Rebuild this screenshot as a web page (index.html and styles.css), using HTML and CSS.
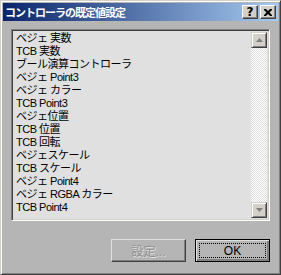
FILE: index.html
```html
<!DOCTYPE html>
<html lang="ja">
<head>
  <meta charset="UTF-8" />
  <title>コントローラの既定値設定</title>
  <link rel="stylesheet" href="styles.css">
</head>
<body>

<div class="window">
  <div class="titlebar">
    <span class="title">コントローラの既定値設定</span>
    <div class="caption-btns">
      <div class="cap-btn">?</div>
      <div class="cap-btn close">
        <svg width="8" height="7" viewBox="0 0 8 7"><path d="M0 0h2l2 2 2-2h2v1l-2.5 2.5 2.5 2.5v1h-2l-2-2-2 2h-2v-1l2.5-2.5-2.5-2.5z" fill="#000"/></svg>
      </div>
    </div>
  </div>

  <div class="content">
    <div class="listbox">
      <ul class="items">
        <li>ベジェ 実数</li>
        <li>TCB 実数</li>
        <li>ブール演算コントローラ</li>
        <li>ベジェ Point3</li>
        <li>ベジェ カラー</li>
        <li>TCB Point3</li>
        <li>ベジェ位置</li>
        <li>TCB 位置</li>
        <li>TCB 回転</li>
        <li>ベジェスケール</li>
        <li>TCB スケール</li>
        <li>ベジェ Point4</li>
        <li>ベジェ RGBA カラー</li>
        <li>TCB Point4</li>
      </ul>
      <div class="scrollbar">
        <div class="sb-btn">
          <svg width="7" height="4" viewBox="0 0 7 4"><path d="M3.5 0L7 4H0z" fill="#808080"/></svg>
        </div>
        <div class="sb-track"></div>
        <div class="sb-btn">
          <svg width="7" height="4" viewBox="0 0 7 4"><path d="M0 0h7L3.5 4z" fill="#808080"/></svg>
        </div>
      </div>
    </div>

    <div class="actions">
      <button class="btn" disabled>設定...</button>
      <button class="btn default"><span class="focus">OK</span></button>
    </div>
  </div>
</div>

</body>
</html>
```

FILE: styles.css
```css
body {
  margin: 0;
  font-family: "Liberation Sans", "Noto Sans CJK JP", sans-serif;
  background: #b5b5b5;
}
.window {
  width: 281px;
  height: 275px;
  box-sizing: border-box;
  background: #b5b5b5;
  border-top: 1px solid #d4d0c8;
  border-left: 1px solid #d4d0c8;
  border-right: 1px solid #404040;
  border-bottom: 1px solid #404040;
  box-shadow: inset 1px 1px #fff, inset -1px -1px #808080;
  padding: 2px;
  display: flex;
  flex-direction: column;
}
.titlebar {
  height: 18px;
  background: linear-gradient(to right, #0a246a, #a6caf0);
  display: flex;
  align-items: center;
  justify-content: space-between;
  padding: 0 2px 0 2px;
}
.title {
  color: #fff;
  font-family: "Noto Sans CJK JP", sans-serif;
  font-weight: bold;
  font-size: 11px;
  line-height: 18px;
  letter-spacing: -1px;
}
.caption-btns {
  display: flex;
  gap: 2px;
}
.cap-btn {
  width: 14px;
  height: 12px;
  background: #d4d0c8;
  border-top: 1px solid #fff;
  border-left: 1px solid #fff;
  border-right: 1px solid #404040;
  border-bottom: 1px solid #404040;
  box-shadow: inset -1px -1px #808080;
  font: bold 12px/12px "DejaVu Sans", sans-serif;
  text-align: center;
  color: #000;
  display: flex;
  align-items: center;
  justify-content: center;
}
.content {
  flex: 1;
  display: flex;
  flex-direction: column;
  padding: 8px 8px 10px 8px;
}
.listbox {
  height: 192px;
  box-sizing: border-box;
  display: flex;
  background: #e0e0e0;
  border-top: 1px solid #808080;
  border-left: 1px solid #808080;
  border-right: 1px solid #fff;
  border-bottom: 1px solid #fff;
  box-shadow: inset 1px 1px #404040, inset -1px -1px #d4d0c8;
  padding: 2px;
}
.items {
  flex: 1;
  list-style: none;
  margin: 0;
  padding: 0 0 0 2px;
  font-size: 11px;
  line-height: 13px;
  letter-spacing: -0.5px;
  color: #000;
}
.items li {
  height: 13px;
  white-space: nowrap;
}
.scrollbar {
  width: 16px;
  display: flex;
  flex-direction: column;
}
.sb-btn {
  width: 16px;
  height: 16px;
  box-sizing: border-box;
  background: #d4d0c8;
  border-top: 1px solid #d4d0c8;
  border-left: 1px solid #d4d0c8;
  border-right: 1px solid #404040;
  border-bottom: 1px solid #404040;
  box-shadow: inset 1px 1px #fff, inset -1px -1px #808080;
  display: flex;
  align-items: center;
  justify-content: center;
}
.sb-track {
  flex: 1;
  background-color: #fff;
  background-image: repeating-conic-gradient(#e0e0e0 0 25%, #fff 0 50%);
  background-size: 2px 2px;
}
.actions {
  display: flex;
  justify-content: flex-end;
  gap: 9px;
  margin-top: 18px;
}
.btn {
  width: 75px;
  height: 23px;
  background: #b5b5b5;
  border-top: 1px solid #e0e0e0;
  border-left: 1px solid #e0e0e0;
  border-right: 1px solid #404040;
  border-bottom: 1px solid #404040;
  box-shadow: inset -1px -1px #808080;
  font-family: "Liberation Sans", "Noto Sans CJK JP", sans-serif;
  font-size: 12px;
  color: #000;
  padding: 0;
}
.btn:disabled {
  color: #909090;
  text-shadow: 1px 1px #e0e0e0;
}
.btn.default {
  border: 1px solid #000;
  box-shadow: inset 1px 1px #e0e0e0, inset -2px -2px #808080;
  padding: 3px;
}
.focus {
  display: flex;
  align-items: center;
  justify-content: center;
  height: 100%;
  border: 1px dotted #000;
  box-sizing: border-box;
}
```
